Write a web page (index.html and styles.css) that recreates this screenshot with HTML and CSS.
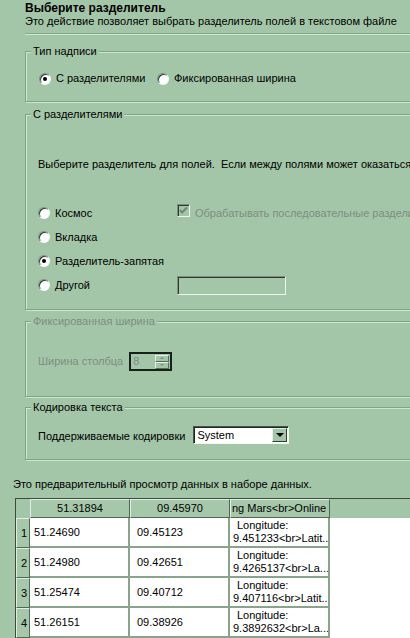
FILE: index.html
```html
<!DOCTYPE html>
<html lang="ru">
<head>
    <meta charset="UTF-8">
    <title>Выберите разделитель</title>
    <link rel="stylesheet" href="styles.css">
</head>
<body>
<div class="page">
    <div class="head">
        <div class="title">Выберите разделитель</div>
        <div class="subtitle">Это действие позволяет выбрать разделитель полей в текстовом файле</div>
    </div>
    <div class="sep"></div>

    <div class="groups">
        <!-- тип надписи -->
        <fieldset class="group g-type">
            <legend>Тип надписи</legend>
            <div class="type-row">
                <label class="radio"><span class="rb on"></span>С разделителями</label>
                <label class="radio"><span class="rb"></span>Фиксированная ширина</label>
            </div>
        </fieldset>

        <!-- с разделителями -->
        <fieldset class="group g-delim">
            <legend>С разделителями</legend>
            <div class="inner">
                <div class="hint">Выберите разделитель для полей.&nbsp; Если между полями может оказаться</div>
                <div class="delim-grid">
                    <label class="radio"><span class="rb"></span>Космос</label>
                    <label class="check off"><span class="cb">
                        <svg width="11" height="11" viewBox="0 0 11 11"><path d="M2 5 L4 7.5 L9 2.5" fill="none" stroke="#6f8571" stroke-width="2"/></svg>
                    </span>Обрабатывать последовательные разделители как один</label>

                    <label class="radio"><span class="rb"></span>Вкладка</label>
                    <span></span>

                    <label class="radio"><span class="rb on"></span>Разделитель-запятая</label>
                    <span></span>

                    <label class="radio"><span class="rb"></span>Другой</label>
                    <span class="txt"></span>
                </div>
            </div>
        </fieldset>

        <!-- фиксированная ширина -->
        <fieldset class="group g-fixed off">
            <legend>Фиксированная ширина</legend>
            <div class="inner field-row">
                <span>Ширина столбца</span>
                <span class="spin">
                    <span class="spin-val">8</span>
                    <span class="spin-btns">
                        <span class="sb"><i class="up"></i></span>
                        <span class="sb"><i class="down"></i></span>
                    </span>
                </span>
            </div>
        </fieldset>

        <!-- кодировка -->
        <fieldset class="group g-enc">
            <legend>Кодировка текста</legend>
            <div class="inner field-row">
                <span>Поддерживаемые кодировки</span>
                <span class="sel">
                    <span class="sel-val">System</span>
                    <span class="sel-btn"><i class="down big"></i></span>
                </span>
            </div>
        </fieldset>
    </div>

    <div class="preview-note">Это предварительный просмотр данных в наборе данных.</div>

    <div class="grid">
        <div class="corner"></div>
        <div class="hc">51.31894</div>
        <div class="hc">09.45970</div>
        <div class="hc left">ng Mars&lt;br&gt;Online</div>
        <div class="blank"></div>

        <div class="nc">1</div>
        <div class="c c1">51.24690</div>
        <div class="c c2">09.45123</div>
        <div class="c c3"><span class="l1">Longitude:</span><span>9.451233&lt;br&gt;Latit...</span></div>
        <div class="fill"></div>

        <div class="nc">2</div>
        <div class="c c1">51.24980</div>
        <div class="c c2">09.42651</div>
        <div class="c c3"><span class="l1">Longitude:</span><span>9.4265137&lt;br&gt;La...</span></div>
        <div class="fill"></div>

        <div class="nc">3</div>
        <div class="c c1">51.25474</div>
        <div class="c c2">09.40712</div>
        <div class="c c3"><span class="l1">Longitude:</span><span>9.407116&lt;br&gt;Latit...</span></div>
        <div class="fill"></div>

        <div class="nc">4</div>
        <div class="c c1">51.26151</div>
        <div class="c c2">09.38926</div>
        <div class="c c3"><span class="l1">Longitude:</span><span>9.3892632&lt;br&gt;La...</span></div>
        <div class="fill"></div>
    </div>
</div>
</body>
</html>
```

FILE: styles.css
```css
html, body {
    margin: 0;
    padding: 0;
}
body {
    width: 410px;
    height: 638px;
    overflow: hidden;
    background-color: #a4c6a8;
    font-family: "Liberation Sans", Arial, sans-serif;
    font-size: 11px;
    line-height: 13px;
    color: #000;
}
.page {
    width: 490px;
}
.head {
    padding: 1px 0 0 25px;
}
.title {
    font-size: 12px;
    font-weight: bold;
    line-height: 14px;
}
.sep {
    margin: 5px 0 0 25px;
    border-top: 1px solid #83a989;
    border-bottom: 1px solid #d3e7d5;
}
.groups {
    padding-left: 25px;
}
.group {
    margin: 6px 0 0;
    padding: 0;
    min-width: 0;
    border: 1px solid #7ea484;
    box-shadow: inset 1px 1px 0 #cfe4d1, 1px 1px 0 #cfe4d1;
}
.g-type {
    margin-top: 10px;
}
.g-fixed {
    margin-top: 5px;
}
.g-enc {
    margin-top: 4px;
}
.group legend {
    height: 13px;
    margin-left: 5px;
    padding: 0 2px;
    background-color: #a4c6a8;
    line-height: 13px;
}
.off legend,
.off,
.check.off {
    color: #7f8d80;
}
.inner {
    padding-left: 12px;
}

/* radio / checkbox */
.radio, .check {
    display: flex;
    align-items: center;
    white-space: nowrap;
}
.rb {
    position: relative;
    flex: none;
    width: 12px;
    height: 12px;
    box-sizing: border-box;
    margin-right: 5px;
    border-radius: 50%;
    background-color: #fff;
    border: 1px solid;
    border-color: #7d8d7e #f3f8f3 #f3f8f3 #7d8d7e;
    box-shadow: inset 1px 1px 0 #2e3a2f;
}
.rb.on::after {
    content: "";
    position: absolute;
    left: 3px;
    top: 3px;
    width: 4px;
    height: 4px;
    border-radius: 50%;
    background-color: #000;
}
.cb {
    flex: none;
    display: flex;
    align-items: center;
    justify-content: center;
    width: 13px;
    height: 13px;
    box-sizing: border-box;
    margin: -5px 5px 0 0;
    border: 1px solid;
    border-color: #7d8d7e #eef6ef #eef6ef #7d8d7e;
    box-shadow: inset 1px 1px 0 #2e3a2f;
    background-color: #a4c6a8;
}

.type-row {
    display: grid;
    grid-template-columns: 118px auto;
    padding: 14px 0 16px 13px;
}

.g-delim .inner {
    padding-top: 37px;
    padding-bottom: 12px;
}
.hint {
    white-space: nowrap;
}
.delim-grid {
    display: grid;
    grid-template-columns: 139px auto;
    grid-auto-rows: 24px;
    align-items: center;
    margin-top: 30px;
}
.txt {
    display: block;
    width: 109px;
    height: 19px;
    box-sizing: border-box;
    border: 1px solid;
    border-color: #7d8d7e #eef6ef #eef6ef #7d8d7e;
    box-shadow: inset 1px 1px 0 #2e3a2f;
}

.field-row {
    display: flex;
    align-items: center;
    white-space: nowrap;
}
.g-fixed .inner {
    padding-top: 24px;
    padding-bottom: 25px;
    gap: 6px;
}
.spin {
    display: flex;
    align-items: center;
    width: 43px;
    height: 19px;
    box-sizing: border-box;
    border: 2px solid #17211a;
}
.spin-val {
    flex: 1;
    padding-left: 2px;
}
.spin-btns {
    display: flex;
    flex-direction: column;
    margin-right: 1px;
}
.sb {
    display: flex;
    align-items: center;
    justify-content: center;
    width: 14px;
    height: 7px;
    box-sizing: border-box;
    border: 1px solid;
    border-color: #e4f0e5 #55705a #55705a #e4f0e5;
}
.up, .down {
    display: block;
    width: 0;
    height: 0;
    border-left: 2px solid transparent;
    border-right: 2px solid transparent;
}
.up {
    border-bottom: 2px solid #7f8d80;
}
.down {
    border-top: 2px solid #7f8d80;
}
.down.big {
    border-left-width: 4px;
    border-right-width: 4px;
    border-top: 4px solid #000;
}

.g-enc .inner {
    padding-top: 12px;
    padding-bottom: 15px;
    gap: 8px;
}
.g-enc .inner > span:first-child {
    padding-top: 2px;
}
.sel {
    display: flex;
    align-items: center;
    width: 96px;
    height: 18px;
    box-sizing: border-box;
    border: 1px solid;
    border-color: #45574a #f2f8f2 #f2f8f2 #45574a;
    box-shadow: inset 1px 1px 0 #1c271d;
    background-color: #fff;
}
.sel-val {
    flex: 1;
    padding-left: 3px;
}
.sel-btn {
    display: flex;
    align-items: center;
    justify-content: center;
    width: 15px;
    height: 14px;
    box-sizing: border-box;
    margin-right: 1px;
    background-color: #a4c6a8;
    border: 1px solid;
    border-color: #e4f0e5 #2f3f31 #2f3f31 #e4f0e5;
}

/* preview */
.preview-note {
    margin: 18px 0 0 13px;
}
.grid {
    display: grid;
    grid-template-columns: 14px 100px 100px 100px 1fr;
    grid-template-rows: 19px repeat(4, 30px);
    margin: 7px 0 0 15px;
    border-top: 1px solid #3b4b3d;
    border-left: 1px solid #3b4b3d;
}
.grid > div {
    box-sizing: border-box;
    overflow: hidden;
    white-space: nowrap;
}
.hc, .nc {
    display: flex;
    align-items: center;
    justify-content: center;
    background-color: #a6c7aa;
    border-top: 1px solid #e1eee2;
    border-left: 1px solid #e1eee2;
    border-right: 1px solid #4e6852;
    border-bottom: 1px solid #4e6852;
}
.hc.left {
    justify-content: flex-start;
    padding-left: 1px;
}
.nc {
    justify-content: flex-end;
    padding-right: 2px;
}
.c {
    display: flex;
    align-items: center;
    background-color: #fff;
    border-right: 2px solid #8aa38d;
    border-bottom: 2px solid #8aa38d;
}
.c1 {
    padding-left: 4px;
}
.c2 {
    padding-left: 7px;
}
.c3 {
    flex-direction: column;
    align-items: flex-start;
    justify-content: center;
    padding-left: 3px;
}
.c3 .l1 {
    padding-left: 4px;
}
.fill {
    background-color: #fff;
}
```
